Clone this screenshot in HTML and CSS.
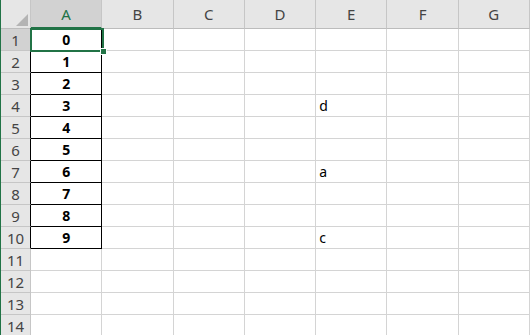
FILE: index.html
```html
<!DOCTYPE html>
<html lang="en">
<head>
    <meta charset="UTF-8">
    <title>Sheet1</title>
    <link rel="stylesheet" href="styles.css">
</head>
<body>

<div class="sheet">
    <table class="grid">
        <thead>
            <tr>
                <th class="corner">
                    <svg width="29" height="28" viewBox="0 0 29 28"><polygon points="27,14 27,26 15,26" fill="#b4b4b4"/></svg>
                </th>
                <th class="col sel">A</th>
                <th class="col">B</th>
                <th class="col">C</th>
                <th class="col">D</th>
                <th class="col">E</th>
                <th class="col">F</th>
                <th class="col">G</th>
            </tr>
        </thead>
        <tbody>
            <tr><th class="row sel">1</th><td class="box num">0</td><td></td><td></td><td></td><td></td><td></td><td></td></tr>
            <tr><th class="row edge">2</th><td class="box num">1</td><td></td><td></td><td></td><td></td><td></td><td></td></tr>
            <tr><th class="row edge">3</th><td class="box num">2</td><td></td><td></td><td></td><td></td><td></td><td></td></tr>
            <tr><th class="row edge">4</th><td class="box num">3</td><td></td><td></td><td></td><td class="txt">d</td><td></td><td></td></tr>
            <tr><th class="row edge">5</th><td class="box num">4</td><td></td><td></td><td></td><td></td><td></td><td></td></tr>
            <tr><th class="row edge">6</th><td class="box num">5</td><td></td><td></td><td></td><td></td><td></td><td></td></tr>
            <tr><th class="row edge">7</th><td class="box num">6</td><td></td><td></td><td></td><td class="txt">a</td><td></td><td></td></tr>
            <tr><th class="row edge">8</th><td class="box num">7</td><td></td><td></td><td></td><td></td><td></td><td></td></tr>
            <tr><th class="row edge">9</th><td class="box num">8</td><td></td><td></td><td></td><td></td><td></td><td></td></tr>
            <tr><th class="row edge">10</th><td class="box num">9</td><td></td><td></td><td></td><td class="txt">c</td><td></td><td></td></tr>
            <tr><th class="row">11</th><td></td><td></td><td></td><td></td><td></td><td></td><td></td></tr>
            <tr><th class="row">12</th><td></td><td></td><td></td><td></td><td></td><td></td><td></td></tr>
            <tr><th class="row">13</th><td></td><td></td><td></td><td></td><td></td><td></td><td></td></tr>
            <tr><th class="row">14</th><td></td><td></td><td></td><td></td><td></td><td></td><td></td></tr>
        </tbody>
    </table>

    <!-- caixa de seleção da célula A1 -->
    <div class="selection"><span class="handle"></span></div>
</div>

</body>
</html>
```

FILE: styles.css
```css
* {
    margin: 0;
    padding: 0;
    box-sizing: border-box;
}

body {
    font-family: "Noto Sans", "Open Sans", sans-serif;
    background-color: #fff;
    color: #000;
    width: 530px;
    height: 335px;
    overflow: hidden;
}

.sheet {
    position: relative;
    border-left: 1px solid #217346;
    height: 335px;
}

.grid {
    border-collapse: separate;
    border-spacing: 0;
    table-layout: fixed;
}

.grid th,
.grid td {
    border-right: 1px solid #d4d4d4;
    border-bottom: 1px solid #d4d4d4;
    height: 22px;
    width: 72px;
    font-size: 14px;
    line-height: 20px;
    padding: 0 3px;
    overflow: hidden;
    white-space: nowrap;
}

/* Cabeçalhos */
.grid thead th {
    height: 29px;
    background-color: #e6e6e6;
    border-right: 1px solid #c6c6c6;
    border-bottom: 1px solid #bcbcbc;
    font-weight: normal;
    color: #444;
    font-size: 15px;
}

.grid th.corner {
    width: 30px;
    padding: 0;
    vertical-align: top;
}

.corner svg {
    display: block;
}

.grid th.row {
    width: 30px;
    padding: 0;
    background-color: #e6e6e6;
    border-right: 1px solid #c6c6c6;
    border-bottom: 1px solid #c6c6c6;
    font-weight: normal;
    color: #444;
    font-size: 15px;
    text-align: center;
}

.grid th.sel {
    background-color: #d2d2d2;
    color: #217346;
}

.grid thead th.sel {
    border-bottom: 2px solid #217346;
}

.grid th.row.sel {
    color: #444;
}

.grid th.row.edge {
    border-right-color: #000;
}

/* Coluna A com bordas */
.grid td.box {
    border-right: 1px solid #000;
    border-bottom: 1px solid #000;
}

.num {
    text-align: center;
    font-weight: bold;
    font-size: 15px;
}

.txt {
    text-align: left;
}

/* Seleção */
.selection {
    position: absolute;
    left: 29px;
    top: 28px;
    width: 74px;
    height: 24px;
    border: 2px solid #217346;
}

.handle {
    position: absolute;
    right: -5px;
    bottom: -5px;
    width: 7px;
    height: 7px;
    background-color: #217346;
    border: 1px solid #fff;
}
```
